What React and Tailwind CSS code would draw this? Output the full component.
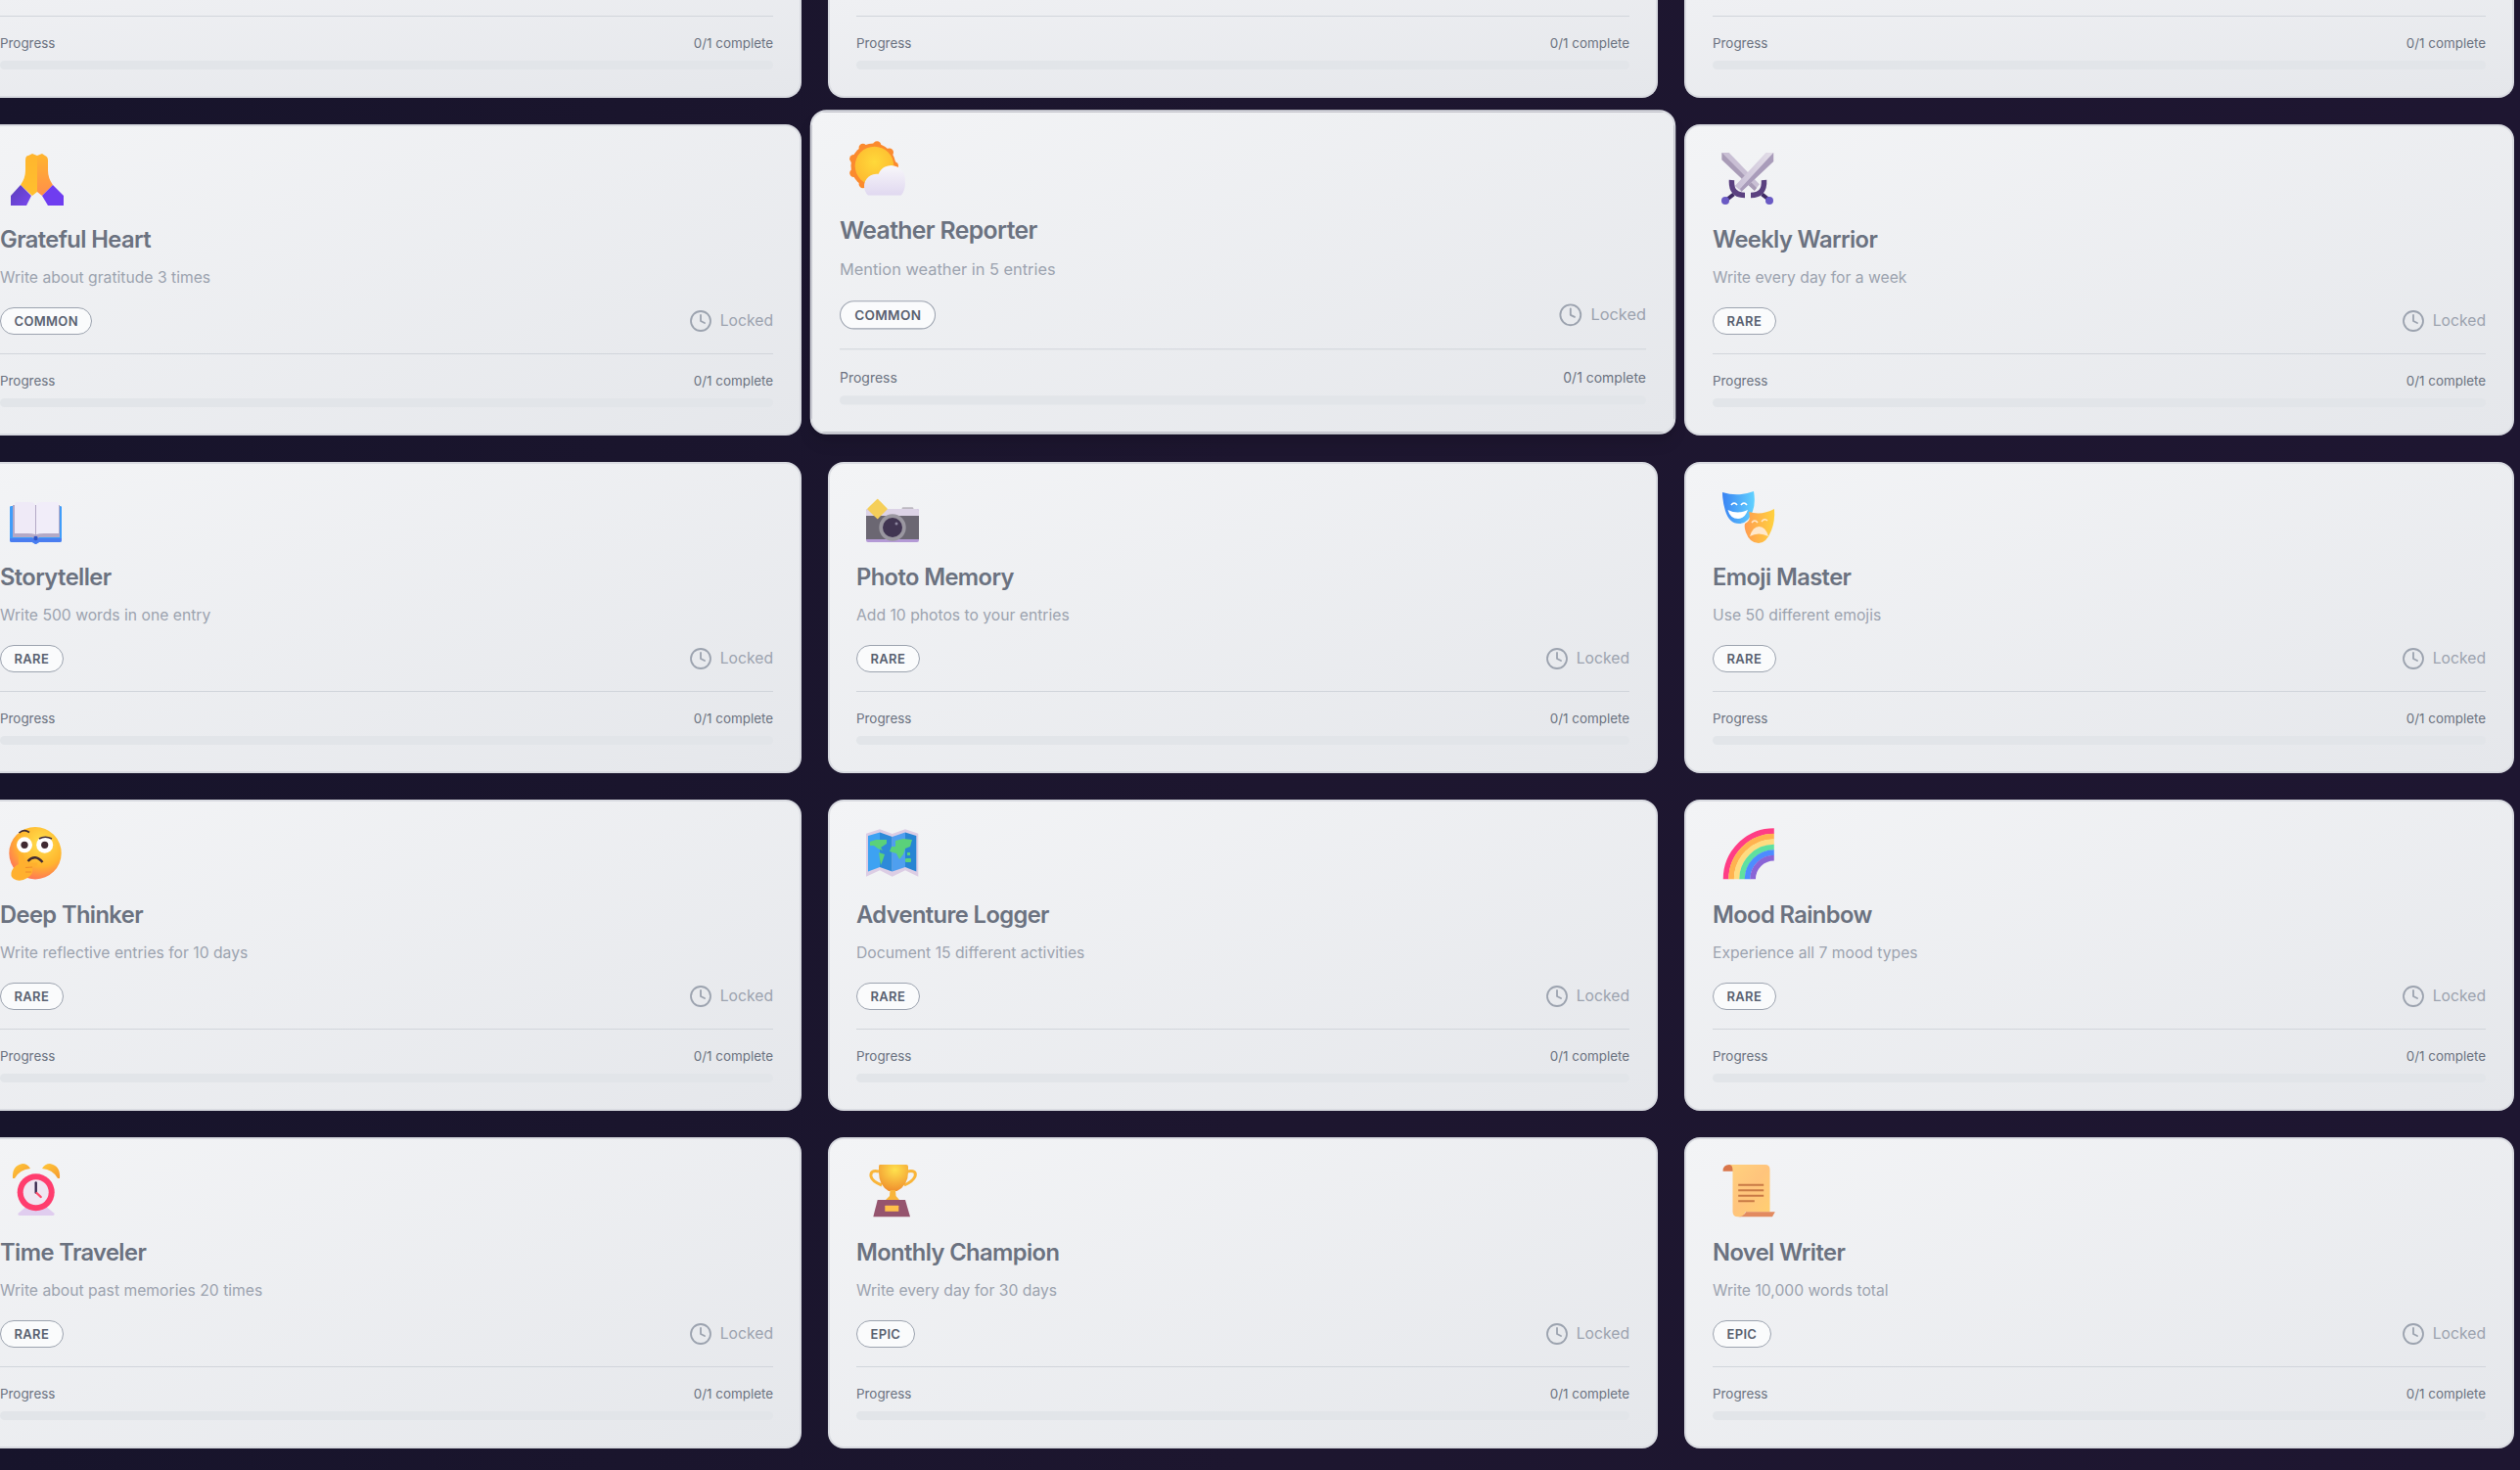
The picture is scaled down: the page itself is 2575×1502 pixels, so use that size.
import React from "react";
import { Clock } from "lucide-react";

const S = ({ children, low }) => (
  <svg width="64" height="56" viewBox={low ? "0 -1 64 56" : "0 0 64 56"} className="block overflow-visible" fill="none">
    {children}
  </svg>
);

const Pray = () => (
  <S>
    <defs>
      <linearGradient id="pr1" x1="0" y1="0" x2="0" y2="1"><stop offset="0" stopColor="#ffb52e" /><stop offset="1" stopColor="#ffc02e" /></linearGradient>
      <linearGradient id="pr2" x1="0" y1="0" x2="0" y2="1"><stop offset="0" stopColor="#ffb52e" /><stop offset="1" stopColor="#ff8f4a" /></linearGradient>
      <linearGradient id="pr3" x1="0" y1="0" x2="1" y2="1"><stop offset="0" stopColor="#5a3fb8" /><stop offset="1" stopColor="#7a48f0" /></linearGradient>
    </defs>
    <path d="M26 8Q26 3 29 3L33 1L38 3L38 40L33 44L21 33Q26 26 26 18Z" fill="url(#pr1)" />
    <path d="M38 3L43 1L46 3Q49 4 49 8L49 18Q49 26 54 33L43 44L38 40Z" fill="url(#pr2)" />
    <path d="M21 33L11 44L11 54L27 54L32 44Z" fill="url(#pr3)" />
    <path d="M54 33L65 44L65 54L49 54L43 44Z" fill="#6f3df0" />
  </S>
);

const Weather = () => (
  <S>
    <defs>
      <radialGradient id="we1" cx="0.5" cy="0.4" r="0.6"><stop offset="0" stopColor="#ffd93a" /><stop offset="1" stopColor="#fdb92f" /></radialGradient>
      <linearGradient id="we2" x1="0" y1="0" x2="0" y2="1"><stop offset="0" stopColor="#f8f7fa" /><stop offset="1" stopColor="#e0d8f0" /></linearGradient>
      <clipPath id="we3"><rect x="0" y="0" width="70" height="55" /></clipPath>
    </defs>
    <g fill="#fb8a2e">
      <circle cx="33" cy="26" r="22" />
      {[0, 40, 80, 120, 160, 200, 240, 280, 320].map((a) => (
        <circle key={a} cx={33 + 20.5 * Math.cos((a * Math.PI) / 180)} cy={26 + 20.5 * Math.sin((a * Math.PI) / 180)} r="4" />
      ))}
    </g>
    <circle cx="34" cy="26" r="19" fill="url(#we1)" />
    <g clipPath="url(#we3)" fill="url(#we2)">
      <path d="M24 46A12 12 0 0 1 38 34A13.5 13.5 0 0 1 64 40Q65 49 60 55L28 55Q24 51 24 46Z" />
    </g>
  </S>
);

const Swords = () => (
  <S>
    <defs>
      <linearGradient id="sw1" x1="0" y1="0" x2="1" y2="0"><stop offset="0" stopColor="#c9bfd6" /><stop offset="1" stopColor="#e4dfe9" /></linearGradient>
    </defs>
    <path d="M9.5 0L16.8 0L47.8 32.3L42.8 39L9.5 7.3Z" fill="#c9bfd4" />
    <path d="M9.5 0L9.5 7.3L42.8 39L45 36Z" fill="#a89bb6" />
    <path d="M62.2 0L62.2 9L29.5 39.7L22.8 34L54.5 0Z" fill="url(#sw1)" />
    <path d="M62.2 0L62.2 9L29.5 39.7L28 37Z" fill="#a99cba" />
    <path d="M19.5 28Q18.5 43.5 33 43.5" stroke="#5b4180" strokeWidth="5.5" />
    <path d="M52.5 28Q53.5 43.5 39 43.5" stroke="#5b4180" strokeWidth="5.5" />
    <path d="M21.5 42.5L14.5 48M50.5 42.5L57.5 48" stroke="#3e2a63" strokeWidth="4" />
    <circle cx="13" cy="49" r="4" fill="#6a5ac4" />
    <circle cx="58" cy="49" r="4" fill="#6a5ac4" />
  </S>
);

const Book = () => (
  <S low>
    <path d="M10 16Q10 15 12 15L61 15Q63 15 63 16L63 50Q63 52 61 52L40 52Q37 54 36.5 54Q36 54 33 52L12 52Q10 52 10 50Z" fill="#3f9dfa" />
    <path d="M10 48L63 48L63 50Q63 52 61 52L40 52Q37 54 36.5 54Q36 54 33 52L12 52Q10 52 10 50Z" fill="#4a7df0" />
    <path d="M13 14L61 14L61 47L40 47Q37 50 36.5 50Q36 50 33 47L13 47Z" fill="#b4a9c6" />
    <path d="M15 13Q15 11 17 11L29 11Q36 11 36 14L36 44Q33 43 29 43L15 43Z" fill="#efeaf7" />
    <path d="M37 14Q37 11 44 11L58 11Q60 11 60 13L60 43L45 43Q40 43 37 44Z" fill="#f1edf9" />
    <circle cx="36.5" cy="48" r="2.2" fill="#2c55c8" />
  </S>
);

const Camera = () => (
  <S low>
    <rect x="46.7" y="16.3" width="11.6" height="3" rx="1" fill="#bcb8c0" />
    <path d="M12 18L62 18Q64 18 64 20L64 50Q64 52 62 52L12 52Q10 52 10 50L10 20Q10 18 12 18Z" fill="#b49ad6" />
    <path d="M12 18L62 18Q64 18 64 20L64 25L10 25L10 20Q10 18 12 18Z" fill="#dcd3e6" />
    <rect x="10" y="25" width="54" height="24" fill="#6b6772" />
    <circle cx="37" cy="37" r="13.7" fill="#9a97a0" />
    <circle cx="37" cy="37" r="10" fill="#413552" />
    <circle cx="41" cy="33" r="1.5" fill="#8d86a0" />
    <path d="M21.7 8.5Q23 10 31 18Q23 26 21.7 27.5Q20 26 12 18Q20 10 21.7 8.5Z" fill="#f5cf5a" strokeLinejoin="round" stroke="#f5cf5a" strokeWidth="1.5" />
  </S>
);

const Masks = () => (
  <S low>
    <defs>
      <linearGradient id="ma1" x1="0" y1="0" x2="1" y2="0"><stop offset="0" stopColor="#3a83f3" /><stop offset="1" stopColor="#62d2ff" /></linearGradient>
      <linearGradient id="ma2" x1="0" y1="0" x2="1" y2="0"><stop offset="0" stopColor="#ff9c50" /><stop offset="1" stopColor="#ffd23f" /></linearGradient>
    </defs>
    <path d="M10 1Q26 6 42 0Q44 12 41 20Q37 33 27 33Q17 33 13 20Q10 10 10 1Z" fill="url(#ma1)" />
    <path d="M15.5 19Q26 24 36 19Q33 28 26 28Q18 28 15.5 19Z" fill="#fff" />
    <path d="M19 14Q22 10 25 14M29 14Q32 10 35 14" stroke="#fff" strokeWidth="1.6" />
    <path d="M37 21Q50 25 63 18Q64 30 60 40Q55 53 47 53Q38 53 34 42Q32 36 33 33Q40 30 37 21Z" fill="url(#ma2)" />
    <path d="M38 46Q41 36 47.5 36Q54 36 57 46Q47 41 38 46Z" fill="#ffe8cc" />
    <path d="M40 32Q43 28 46 32M50 31Q53 27 56 30" stroke="#ffe8cc" strokeWidth="1.6" />
  </S>
);

const Thinking = () => (
  <S low>
    <defs>
      <radialGradient id="th1" cx="0.62" cy="0.3" r="0.75"><stop offset="0" stopColor="#ffe14d" /><stop offset="0.6" stopColor="#ffb52e" /><stop offset="1" stopColor="#ff6f5a" /></radialGradient>
    </defs>
    <circle cx="36" cy="24.7" r="26.7" fill="url(#th1)" />
    <circle cx="25" cy="16.3" r="8" fill="#fff" />
    <circle cx="45.7" cy="16.3" r="8.5" fill="#fff" />
    <circle cx="25" cy="16.3" r="3.6" fill="#402a32" />
    <circle cx="45.7" cy="16.3" r="3.6" fill="#402a32" />
    <path d="M19.5 4Q24.5 -0.5 30 3.5M40 10Q46 6.5 53 10" stroke="#402a32" strokeWidth="1.6" />
    <path d="M28.5 33Q36 25 43.5 34" stroke="#402a32" strokeWidth="2.4" />
    <path d="M19 26Q22 25 24 27L25 35L38 34.5Q39 37.5 36 38.5L33 39Q35 46 28 50Q20 55 14 51Q10 48 12 43Q14 38 19 36Z" fill="#ffb02e" />
    <path d="M26 39.5L33 39M26 44L32 44" stroke="#f08a2a" strokeWidth="1" />
  </S>
);

const MapIcon = () => (
  <S low>
    <path d="M10 4.7L24 0.3L36.7 5L50 0.3L63.3 4.7L63.3 48.7L50 42.3L36.7 48.7L24 42.3L10 48.7Z" fill="#dccde4" />
    <path d="M12 7L24 3.5L24 39L12 43.5Z" fill="#3da2f2" />
    <path d="M24 3.5L36.7 8L36.7 43.5L24 39Z" fill="#2d8ad9" />
    <path d="M36.7 8L50 3.5L50 39L36.7 43.5Z" fill="#4f9fef" />
    <path d="M50 3.5L61.3 7L61.3 43.5L50 39Z" fill="#2785d3" />
    <g fill="#5ad17a">
      <path d="M14 13L20 11L31 11L31 15L25 19L27 22L22 20L18 17L14 17Z" />
      <path d="M23 24L29 26L27 32L25 37L24 31Z" />
      <path d="M40 12L48 10L57 11L55 18L50 20L48 26L44 31L41 25L34 23L36 18L40 18Z" />
      <rect x="50" y="30" width="6" height="4" rx="1" />
      <rect x="52" y="24" width="3" height="3" />
    </g>
  </S>
);

const Rainbow = () => (
  <S low>
    {[
      ["#ff3d85", 49.2],
      ["#ffb34f", 43.7],
      ["#ffdc80", 38.2],
      ["#5fe0a0", 32.7],
      ["#4d8cff", 27.2],
      ["#8a64d6", 21.7],
    ].map(([c, r]) => (
      <path key={c} d={`M${62.8 - r} 51.3A${r} ${r} 0 0 1 62.8 ${51.3 - r}`} stroke={c} strokeWidth="5.7" />
    ))}
  </S>
);

const Alarm = () => (
  <S low>
    <defs>
      <linearGradient id="al1" x1="0" y1="0" x2="1" y2="1"><stop offset="0" stopColor="#ffc83a" /><stop offset="1" stopColor="#f59a2e" /></linearGradient>
    </defs>
    <path d="M13 12Q12 -1 23 -3Q28 -3 31 2Q20 3 15 12Z" fill="url(#al1)" />
    <path d="M61 12Q62 -1 51 -3Q46 -3 43 2Q54 3 59 12Z" fill="url(#al1)" />
    <path d="M28 40L46 40L55.7 48Q55.7 50 54 50L20 50Q18.3 50 18.3 48Z" fill="#e0cdef" />
    <circle cx="36.7" cy="26.3" r="19" fill="#ff3d6e" />
    <circle cx="36.7" cy="26.3" r="13" fill="#efe6f2" />
    <path d="M36.7 16.5L36.7 26.5" stroke="#3a2a50" strokeWidth="2.4" strokeLinecap="round" />
    <path d="M37.5 27L41.7 31" stroke="#ff4d6e" strokeWidth="2.4" strokeLinecap="round" />
  </S>
);

const Trophy = () => (
  <S low>
    <defs>
      <radialGradient id="tr1" cx="0.55" cy="0.2" r="0.8"><stop offset="0" stopColor="#ffe14d" /><stop offset="1" stopColor="#f0902e" /></radialGradient>
    </defs>
    <path d="M23 5Q14 3 15 10Q16 15 26 19M52 5Q62 3 60 10Q58 15 49 19" stroke="#f9b53a" strokeWidth="3" />
    <path d="M24 -2L51 -2Q53 -2 53 0L53 6Q53 19 41.5 25L33 25Q23 19 23 6L23 0Q23 -2 24 -2Z" fill="url(#tr1)" />
    <path d="M34.5 24L40 24L40.5 30L44 34L30 34L34 30Z" fill="#f9b53a" />
    <path d="M21.7 34L50 34L55 51.3L17.3 51.3Z" fill="#95546e" />
    <rect x="29.3" y="39.7" width="14" height="6" rx="0.5" fill="#ffc04a" />
  </S>
);

const Scroll = () => (
  <S low>
    <defs>
      <linearGradient id="sc1" x1="0" y1="0" x2="1" y2="1"><stop offset="0" stopColor="#ffd27e" /><stop offset="0.5" stopColor="#ffc47c" /><stop offset="1" stopColor="#ffd070" /></linearGradient>
    </defs>
    <path d="M10.5 4.7Q10.5 -2 17 -2L21 -2L21 4.7Z" fill="#d9764a" />
    <path d="M17 -2L53.5 -2Q58.5 -2 58.5 3L58.5 46.5L33 46.5Q33 51.3 26 51.3Q20.5 51.3 20.5 46L20.5 4Q20.5 -2 17 -2Z" fill="url(#sc1)" />
    <path d="M34 46.3L63.8 46.3L61 51.3L26 51.3Q32 51 34 46.3Z" fill="#e28a60" />
    <path d="M26.2 18.7L52.2 18.7M26.2 24.3L52.2 24.3M26.2 29.7L52.2 29.7M26.2 35.3L42.8 35.3" stroke="#c97a45" strokeWidth="2" />
  </S>
);

const Footer = () => (
  <div className="border-t border-[#d1d5db] pt-[17px]">
    <div className="flex items-center justify-between text-[13.4px] leading-5 text-[#6b7280]">
      <span>Progress</span>
      <span>0/1 complete</span>
    </div>
    <div className="mt-2 h-[9px] rounded-full bg-[#e2e5e9]" />
  </div>
);

const Card = ({ icon: Icon, title, desc, rarity, hover }) => (
  <div
    className={`h-[318px] rounded-2xl border-2 border-[#d9dbe1] bg-linear-to-br from-[#f3f4f6] to-[#e5e7eb] px-[27px] pt-[27px] ${
      hover ? "relative z-10 -translate-y-2 scale-[1.043] border-[#cfd2d9] shadow-lg" : ""
    }`}
  >
    <div className="h-[64px]">
      <Icon />
    </div>
    <h3 className="mt-[9px] text-[23.7px] leading-8 font-semibold tracking-tight text-[#6b7280]">{title}</h3>
    <p className="mt-[11px] text-[15.7px] leading-6 text-[#9ca3af]">{desc}</p>
    <div className="mt-[18px] flex h-7 items-center justify-between">
      <span className="rounded-full border border-[#9ca3af] bg-[#fafbfc] px-[13.5px] text-[13px] leading-[26px] font-semibold tracking-wide text-[#596170]">
        {rarity}
      </span>
      <span className="flex items-center gap-2 text-[15.7px] text-[#9ca3af]">
        <Clock className="h-6 w-6" strokeWidth={1.8} />
        Locked
      </span>
    </div>
    <div className="mt-[19px]">
      <Footer />
    </div>
  </div>
);

const rows = [
  [
    { icon: Pray, title: "Grateful Heart", desc: "Write about gratitude 3 times", rarity: "COMMON" },
    { icon: Weather, title: "Weather Reporter", desc: "Mention weather in 5 entries", rarity: "COMMON", hover: true },
    { icon: Swords, title: "Weekly Warrior", desc: "Write every day for a week", rarity: "RARE" },
  ],
  [
    { icon: Book, title: "Storyteller", desc: "Write 500 words in one entry", rarity: "RARE" },
    { icon: Camera, title: "Photo Memory", desc: "Add 10 photos to your entries", rarity: "RARE" },
    { icon: Masks, title: "Emoji Master", desc: "Use 50 different emojis", rarity: "RARE" },
  ],
  [
    { icon: Thinking, title: "Deep Thinker", desc: "Write reflective entries for 10 days", rarity: "RARE" },
    { icon: MapIcon, title: "Adventure Logger", desc: "Document 15 different activities", rarity: "RARE" },
    { icon: Rainbow, title: "Mood Rainbow", desc: "Experience all 7 mood types", rarity: "RARE" },
  ],
  [
    { icon: Alarm, title: "Time Traveler", desc: "Write about past memories 20 times", rarity: "RARE" },
    { icon: Trophy, title: "Monthly Champion", desc: "Write every day for 30 days", rarity: "EPIC" },
    { icon: Scroll, title: "Novel Writer", desc: "Write 10,000 words total", rarity: "EPIC" },
  ],
];

export default function App() {
  return (
    <div className="h-[1502px] w-[2575px] overflow-hidden bg-linear-to-r from-[#17142b] via-[#1d162f] to-[#1e1631] font-['Inter',sans-serif]">
      <div className="-ml-[29px] grid w-[2598px] grid-cols-3 gap-[27px]">
        {[0, 1, 2].map((i) => (
          <div
            key={i}
            className="flex h-[100px] flex-col justify-end rounded-b-2xl border-x-2 border-b-2 border-[#d9dbe1] bg-linear-to-br from-[#eff0f3] to-[#e5e7eb] px-[27px] pb-[27px]"
          >
            <Footer />
          </div>
        ))}
        {rows.flat().map((c) => (
          <Card key={c.title} {...c} />
        ))}
      </div>
    </div>
  );
}
